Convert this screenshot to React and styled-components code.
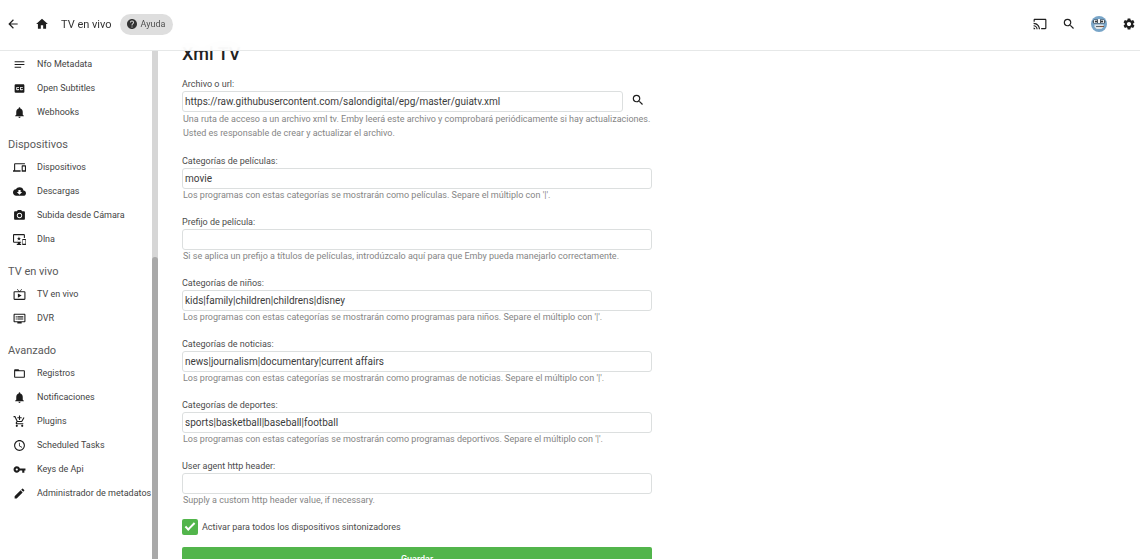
import React from 'react';

import styled, { createGlobalStyle } from 'styled-components';
import {
  MdAddShoppingCart,
  MdArrowBack,
  MdCast,
  MdClosedCaption,
  MdCloudDownload,
  MdDevices,
  MdDvr,
  MdFolderOpen,
  MdHelp,
  MdHome,
  MdImportantDevices,
  MdLiveTv,
  MdModeEdit,
  MdNotes,
  MdPhotoCamera,
  MdSchedule,
  MdSearch,
  MdSettings
} from 'react-icons/md';

const GlobalStyle = createGlobalStyle`
  * {
    box-sizing: border-box;
  }

  body {
    background: #fff;
    color: #444;
    font-family: Roboto, "Liberation Sans", sans-serif;
    margin: 0;
  }
`;

const PageWrapper = styled.div`
  display: flex;
  flex-direction: column;
  height: 100vh;
  overflow: hidden;
`;

const Header = styled.header`
  align-items: center;
  backdrop-filter: blur(6px);
  background: rgba(255, 255, 255, 0.92);
  border-bottom: 1px solid #e6e8e8;
  display: flex;
  flex: 0 0 51px;
  justify-content: space-between;
  padding: 0 4px 2px 6px;
  position: relative;
  z-index: 1;
`;

const HeaderGroup = styled.div`
  align-items: center;
  display: flex;
  gap: ${props => props.$gap};
`;

const IconButton = styled.button`
  align-items: center;
  background: none;
  border: 0;
  color: #1f1f1f;
  cursor: pointer;
  display: flex;
  font-size: 14px;
  padding: 0;
`;

const PageTitle = styled.span`
  color: #333;
  font-size: 11px;
`;

const HelpLink = styled.a`
  align-items: center;
  background: #dedede;
  border-radius: 11px;
  color: #505050;
  display: flex;
  font-size: 9px;
  gap: 3px;
  height: 21px;
  padding: 0 8px 0 6px;
  text-decoration: none;

  svg {
    color: #333;
    font-size: 12px;
  }
`;

const Body = styled.div`
  display: flex;
  flex: 1 1 0;
  min-height: 0;
`;

const SideBar = styled.nav`
  flex: 0 0 152px;
  overflow: hidden;
  padding-top: 1px;
`;

const NavSection = styled.section`
  margin-bottom: 13px;
`;

const NavTitle = styled.h2`
  color: #5a5a5a;
  font-size: 11px;
  font-weight: 400;
  line-height: 16px;
  margin: 0 0 2px;
  padding-left: 8px;
`;

const NavItem = styled.a`
  align-items: center;
  color: #444;
  display: flex;
  font-size: 9px;
  gap: 11px;
  height: 24px;
  padding-left: 13px;
  text-decoration: none;
  white-space: nowrap;

  svg {
    color: #1c1c1c;
    flex: none;
    font-size: 13px;
  }
`;

const ScrollTrack = styled.div`
  background: #d6d6d6;
  display: flex;
  flex: 0 0 6px;
  flex-direction: column;
  justify-content: flex-end;
`;

const ScrollThumb = styled.div`
  background: #a9a9a9;
  border-radius: 3px 3px 0 0;
  height: 59.5%;
`;

const Content = styled.main`
  flex: 1 1 0;
  padding: 0 24px;
`;

const Form = styled.form`
  max-width: 470px;
`;

const FormTitle = styled.h1`
  color: #222;
  font-size: 18px;
  font-weight: 500;
  line-height: 24px;
  margin: -9px 0 12px;
`;

const Field = styled.div`
  margin-bottom: 15px;

  &:last-of-type {
    margin-bottom: 13px;
  }
`;

const Label = styled.label`
  color: #4c4c4c;
  display: block;
  font-size: 9px;
  line-height: 12px;
  margin-bottom: 1px;
`;

const InputRow = styled.div`
  align-items: flex-start;
  display: flex;
  gap: 8px;

  ${IconButton} {
    padding: 2px 7px 0 0;
  }
`;

const TextInput = styled.input`
  background: #fff;
  border: 1px solid #dcdfdf;
  border-radius: 3px;
  color: #3c3c3c;
  flex: 1 1 0;
  font-family: inherit;
  font-size: 10px;
  height: 21px;
  min-width: 0;
  outline: none;
  padding: 0 2px;
`;

const Description = styled.p`
  color: #858585;
  font-size: 9px;
  line-height: ${props => (props.$tall ? '14px' : '12px')};
  margin: 0;
  padding-left: 1px;
`;

const CheckLabel = styled.label`
  align-items: center;
  color: #4c4c4c;
  display: flex;
  font-size: 9px;
  gap: 4px;
  margin-bottom: 12px;
`;

const CheckBox = styled.input`
  appearance: none;
  background: #52b54b;
  border-radius: 2px;
  display: grid;
  height: 16px;
  margin: 0;
  place-items: center;
  width: 16px;

  &:checked::before {
    border: solid #fff;
    border-width: 0 0 2px 2px;
    content: "";
    height: 3px;
    margin-bottom: 3px;
    transform: rotate(-45deg);
    width: 8px;
  }
`;

const SaveButton = styled.button`
  background: #52b54b;
  border: 0;
  border-radius: 2px;
  color: #fff;
  cursor: pointer;
  font-family: inherit;
  font-size: 9px;
  font-weight: 500;
  height: 24px;
  width: 100%;
`;

const BellIcon = () => (
  <svg width="1em" height="1em" viewBox="0 0 24 24" fill="currentColor">
    <path d="M12 22c1.100 0 2-.9 2-2h-4c0 1.100.89 2 2 2zm6-6v-5c0-3.070-1.640-5.640-4.500-6.320V4c0-.83-.67-1.500-1.500-1.500s-1.500.67-1.500 1.500v.68C7.630 5.360 6 7.920 6 11v5l-2 2v1h16v-1l-2-2z" />
  </svg>
);

const KeyIcon = () => (
  <svg width="1em" height="1em" viewBox="0 0 24 24" fill="currentColor">
    <path d="M12.650 10C11.830 7.670 9.610 6 7 6c-3.310 0-6 2.690-6 6s2.690 6 6 6c2.610 0 4.830-1.670 5.650-4H17v4h4v-4h2v-4H12.650zM7 14c-1.100 0-2-.9-2-2s.9-2 2-2 2 .9 2 2-.9 2-2 2z" />
  </svg>
);

const sections = [
  {
    items: [
      [MdNotes, 'Nfo Metadata'],
      [MdClosedCaption, 'Open Subtitles'],
      [BellIcon, 'Webhooks']
    ]
  },
  {
    title: 'Dispositivos',
    items: [
      [MdDevices, 'Dispositivos'],
      [MdCloudDownload, 'Descargas'],
      [MdPhotoCamera, 'Subida desde Cámara'],
      [MdImportantDevices, 'Dlna']
    ]
  },
  {
    title: 'TV en vivo',
    items: [
      [MdLiveTv, 'TV en vivo'],
      [MdDvr, 'DVR']
    ]
  },
  {
    title: 'Avanzado',
    items: [
      [MdFolderOpen, 'Registros'],
      [BellIcon, 'Notificaciones'],
      [MdAddShoppingCart, 'Plugins'],
      [MdSchedule, 'Scheduled Tasks'],
      [KeyIcon, 'Keys de Api'],
      [MdModeEdit, 'Administrador de metadatos']
    ]
  }
];

const fields = [
  {
    id: 'movieCategories',
    label: 'Categorías de películas:',
    value: 'movie',
    description: "Los programas con estas categorías se mostrarán como películas. Separe el múltiplo con '|'."
  },
  {
    id: 'moviePrefix',
    label: 'Prefijo de película:',
    value: '',
    description: 'Si se aplica un prefijo a títulos de películas, introdúzcalo aquí para que Emby pueda manejarlo correctamente.'
  },
  {
    id: 'kidsCategories',
    label: 'Categorías de niños:',
    value: 'kids|family|children|childrens|disney',
    description: "Los programas con estas categorías se mostrarán como programas para niños. Separe el múltiplo con '|'."
  },
  {
    id: 'newsCategories',
    label: 'Categorías de noticias:',
    value: 'news|journalism|documentary|current affairs',
    description: "Los programas con estas categorías se mostrarán como programas de noticias. Separe el múltiplo con '|'."
  },
  {
    id: 'sportsCategories',
    label: 'Categorías de deportes:',
    value: 'sports|basketball|baseball|football',
    description: "Los programas con estas categorías se mostrarán como programas deportivos. Separe el múltiplo con '|'."
  },
  {
    id: 'userAgent',
    label: 'User agent http header:',
    value: '',
    description: 'Supply a custom http header value, if necessary.'
  }
];

const Avatar = () => (
  <svg width="16" height="16" viewBox="0 0 16 16" aria-hidden="true">
    <circle cx="8" cy="8" r="8" fill="#78a5c8" />
    <path d="M1.500 5.500 3 3.500h10l1.500 2-1 2h-11z" fill="#4c555c" />
    <rect x="3" y="4" width="3" height="3" fill="#e8ecef" />
    <rect x="10" y="4" width="3" height="3" fill="#e8ecef" />
    <rect x="7" y="3" width="2" height="4" fill="#f4f4f4" />
    <circle cx="5" cy="5.500" r="1" fill="#222" />
    <circle cx="11" cy="5.500" r="1" fill="#222" />
    <path d="M3.500 8.500h9v2.500l-2 2h-5l-2-2z" fill="#dde3e7" />
    <path d="M5 10.500h4" stroke="#5c646a" />
    <path d="M9 10.500h4" stroke="#80543b" />
  </svg>
);

const App = () => (
  <PageWrapper>
    <GlobalStyle />
    <Header>
      <HeaderGroup $gap="12px">
        <HeaderGroup $gap="15px">
          <IconButton aria-label="Atrás"><MdArrowBack /></IconButton>
          <IconButton aria-label="Inicio"><MdHome /></IconButton>
        </HeaderGroup>
        <HeaderGroup $gap="8px">
          <PageTitle>TV en vivo</PageTitle>
          <HelpLink href="#ayuda"><MdHelp />Ayuda</HelpLink>
        </HeaderGroup>
      </HeaderGroup>
      <HeaderGroup $gap="15px">
        <IconButton aria-label="Enviar"><MdCast /></IconButton>
        <IconButton aria-label="Buscar"><MdSearch /></IconButton>
        <IconButton aria-label="Usuario"><Avatar /></IconButton>
        <IconButton aria-label="Ajustes"><MdSettings /></IconButton>
      </HeaderGroup>
    </Header>
    <Body>
      <SideBar>
        {sections.map(section => (
          <NavSection key={section.title || 'top'}>
            {section.title && <NavTitle>{section.title}</NavTitle>}
            {section.items.map(([Icon, text]) => (
              <NavItem key={text} href="#"><Icon />{text}</NavItem>
            ))}
          </NavSection>
        ))}
      </SideBar>
      <ScrollTrack><ScrollThumb /></ScrollTrack>
      <Content>
        <Form onSubmit={e => e.preventDefault()}>
          <FormTitle>Xml TV</FormTitle>
          <Field>
            <Label htmlFor="path">Archivo o url:</Label>
            <InputRow>
              <TextInput
                  id="path"
                  type="text"
                  defaultValue="https://raw.githubusercontent.com/salondigital/epg/master/guiatv.xml" />
              <IconButton type="button" aria-label="Examinar"><MdSearch /></IconButton>
            </InputRow>
            <Description $tall>
              Una ruta de acceso a un archivo xml tv. Emby leerá este archivo y comprobará periódicamente si hay
              actualizaciones. Usted es responsable de crear y actualizar el archivo.
            </Description>
          </Field>
          {fields.map(field => (
            <Field key={field.id}>
              <Label htmlFor={field.id}>{field.label}</Label>
              <InputRow>
                <TextInput id={field.id} type="text" defaultValue={field.value} />
              </InputRow>
              <Description>{field.description}</Description>
            </Field>
          ))}
          <CheckLabel>
            <CheckBox type="checkbox" defaultChecked />
            Activar para todos los dispositivos sintonizadores
          </CheckLabel>
          <SaveButton type="submit">Guardar</SaveButton>
        </Form>
      </Content>
    </Body>
  </PageWrapper>
);

export default App;
